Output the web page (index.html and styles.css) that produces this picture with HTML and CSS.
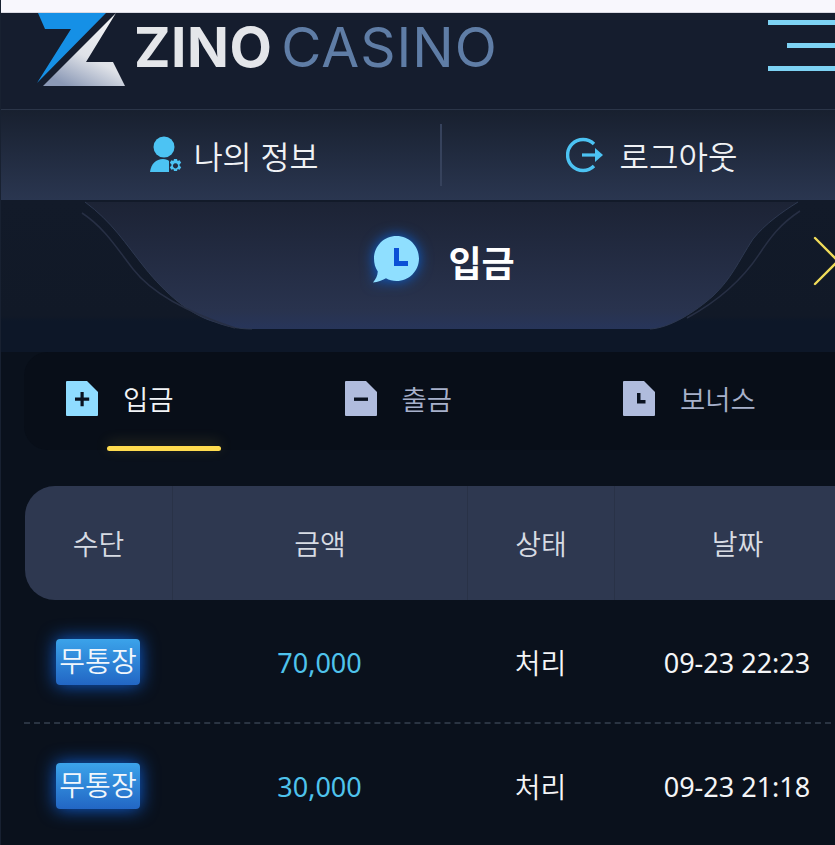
FILE: index.html
```html
<!DOCTYPE html>
<html lang="ko">
<head>
    <meta charset="UTF-8">
    <meta name="viewport" content="width=device-width, initial-scale=1.0">
    <title>Zino Casino - 입금</title>
    <link rel="stylesheet" href="styles.css">
</head>
<body>
    <div class="page">
        <div class="top-strip"></div>

        <header class="site-header">
            <a class="logo" href="#">
                <svg class="logo-mark" width="90" height="73" viewBox="0 0 90 73">
                    <defs>
                        <linearGradient id="markGrey" x1="0.8" y1="0.1" x2="0.3" y2="1">
                            <stop offset="0" stop-color="#f1f2f4"/>
                            <stop offset="0.55" stop-color="#dfe2e8"/>
                            <stop offset="1" stop-color="#8b99b6"/>
                        </linearGradient>
                    </defs>
                    <polygon points="1,0 69,0 0,70 34,16 8,16" fill="#1590e6"/>
                    <polygon points="79,0 49,49 76,49 88,73 6,73" fill="url(#markGrey)"/>
                </svg>
                <span class="logo-text"><b>ZINO</b><span>CASINO</span></span>
            </a>
            <div class="menu-btn">
                <span></span>
                <span class="short"></span>
                <span></span>
            </div>
        </header>

        <nav class="user-nav">
            <a class="user-link user-link-info" href="#">
                <svg width="34" height="38" viewBox="0 0 34 38">
                    <circle cx="14" cy="11" r="10.5" fill="#4cc3f3"/>
                    <path d="M0 36 C1 28 6 23 13 23 C16 23 18 24 19 25 L19 36 Z" fill="#4cc3f3"/>
                    <path d="M24 23 h3 l.6 2 2-.8 1.6 2.6-1.6 1.4 v1.6 l1.6 1.4-1.6 2.6-2-.8-.6 2 h-3 l-.6-2-2 .8-1.6-2.6 1.6-1.4 v-1.6 l-1.6-1.4 1.6-2.6 2 .8 Z M25.5 27.2 a2.6 2.6 0 1 0 .01 0 Z" fill="#4cc3f3" fill-rule="evenodd"/>
                </svg>
                <span>나의 정보</span>
            </a>
            <a class="user-link" href="#">
                <svg width="38" height="36" viewBox="0 0 38 36">
                    <path d="M28 7 A15.5 15.5 0 1 0 28 29" fill="none" stroke="#4cc3f3" stroke-width="3.4"/>
                    <rect x="16" y="16.4" width="15" height="3.2" fill="#4cc3f3"/>
                    <polygon points="29,11 37,18 29,25" fill="#4cc3f3"/>
                </svg>
                <span>로그아웃</span>
            </a>
        </nav>

        <section class="title-area">
            <svg class="title-shape" width="835" height="130" viewBox="0 0 835 130">
                <defs>
                    <linearGradient id="panelFill" x1="0" y1="0" x2="0" y2="1">
                        <stop offset="0" stop-color="#1c2335"/>
                        <stop offset="0.85" stop-color="#29334e"/>
                        <stop offset="1" stop-color="#27355a"/>
                    </linearGradient>
                </defs>
                <path d="M85 2 C112 22 125 43 145 68 C165 93 190 115 215 122 C228 127 240 129 252 129 L650 129 C670 128 695 112 713 96 C732 78 738 62 753 39 C765 24 782 12 798 2 Z" fill="url(#panelFill)"/>
                <path d="M85 2 C112 22 125 43 145 68 C165 93 190 115 215 122 C228 127 240 129 252 129" fill="none" stroke="#2d3850" stroke-width="1"/>
                <path d="M650 129 C670 128 695 112 713 96 C732 78 738 62 753 39 C765 24 782 12 798 2" fill="none" stroke="#2d3850" stroke-width="1"/>
                <path d="M82 13 C105 28 118 50 133 69 C150 91 180 110 235 128" fill="none" stroke="#272f44" stroke-width="1.5"/>
                <path d="M800 11 C780 24 770 38 760 53 C745 76 720 100 687 118" fill="none" stroke="#272f44" stroke-width="1.5"/>
            </svg>
            <svg class="next-arrow" width="22" height="50" viewBox="0 0 22 50">
                <path d="M2 2 L25 25 L2 48" fill="none" stroke="#f0dc5a" stroke-width="2.4" stroke-linecap="round"/>
            </svg>
            <div class="title-row">
                <svg class="title-icon" width="48" height="48" viewBox="0 0 48 48">
                    <path d="M24.500 1 C37 1 47 11 47 23.500 C47 36 37 46 24.500 46 C20.500 46 17 45 14 43.200 C10 45.500 6 47 1 47.500 C4 44 5.500 40.500 5.800 36.500 C3.200 32.800 2 28.500 2 23.500 C2 11 12 1 24.500 1 Z" fill="#8fdfff"/>
                    <path d="M22 13 h5 v13 h9 v5 h-14 Z" fill="#0b50d6"/>
                </svg>
                <h1>입금</h1>
            </div>
        </section>

        <div class="tabs">
            <a class="tab active" href="#">
                <svg width="32" height="35" viewBox="0 0 32 35">
                    <path class="doc" d="M1 0 H21 L32 11 V34 a1 1 0 0 1 -1 1 H1 a1 1 0 0 1 -1 -1 V1 a1 1 0 0 1 1 -1 Z"/>
                    <path class="doc-mark" d="M14.500 11 h3.200 v5.500 h5.500 v3.200 h-5.500 v5.500 h-3.200 v-5.500 h-5.500 v-3.200 h5.500 Z"/>
                </svg>
                <span>입금</span>
            </a>
            <a class="tab" href="#">
                <svg width="32" height="35" viewBox="0 0 32 35">
                    <path class="doc" d="M1 0 H21 L32 11 V34 a1 1 0 0 1 -1 1 H1 a1 1 0 0 1 -1 -1 V1 a1 1 0 0 1 1 -1 Z"/>
                    <rect class="doc-mark" x="9" y="16.500" width="14" height="3.400"/>
                </svg>
                <span>출금</span>
            </a>
            <a class="tab" href="#">
                <svg width="32" height="35" viewBox="0 0 32 35">
                    <path class="doc" d="M1 0 H21 L32 11 V34 a1 1 0 0 1 -1 1 H1 a1 1 0 0 1 -1 -1 V1 a1 1 0 0 1 1 -1 Z"/>
                    <path class="doc-mark" d="M14 12 h3.500 v7 h5 v3.500 h-8.500 Z"/>
                </svg>
                <span>보너스</span>
            </a>
        </div>

        <div class="history">
            <div class="history-head">
                <div>수단</div>
                <div>금액</div>
                <div>상태</div>
                <div>날짜</div>
            </div>
            <div class="history-row">
                <div><span class="badge">무통장</span></div>
                <div class="amount">70,000</div>
                <div>처리</div>
                <div class="date">09-23 22:23</div>
            </div>
            <div class="history-row">
                <div><span class="badge">무통장</span></div>
                <div class="amount">30,000</div>
                <div>처리</div>
                <div class="date">09-23 21:18</div>
            </div>
        </div>
    </div>
</body>
</html>
```

FILE: styles.css
```css
* {
    margin: 0;
    padding: 0;
    box-sizing: border-box;
}

html, body {
    height: 100%;
    overflow: hidden;
}

body {
    background-color: #0a111c;
    color: #fff;
    font-family: "Noto Sans", "Noto Sans CJK KR", sans-serif;
}

a {
    color: inherit;
    text-decoration: none;
}

.page {
    width: 835px;
    height: 845px;
    overflow: hidden;
    border-left: 1px solid #182131;
}

.top-strip {
    height: 13px;
    margin-left: -1px;
    background: #f8f7fd;
    border-bottom: 1px solid #d9d9e2;
}

/* header */
.site-header {
    display: flex;
    justify-content: space-between;
    height: 97px;
    margin-left: -1px;
    background: #151d2e;
    border-bottom: 1px solid #2b3548;
}

.logo {
    display: flex;
    align-items: flex-start;
    padding-left: 37px;
}

.logo-text {
    margin: 9px 0 0 7px;
    font-family: Inter, "Liberation Sans", sans-serif;
    font-size: 55px;
    font-weight: 400;
    line-height: 50px;
    white-space: nowrap;
    letter-spacing: 1px;
}

.logo-text b {
    color: #e4e6ea;
    font-weight: 700;
    letter-spacing: 0.5px;
}

.logo-text span {
    margin-left: 9px;
    color: #5f7da6;
}

.menu-btn {
    display: flex;
    flex-direction: column;
    align-items: flex-end;
    gap: 18px;
    width: 67px;
    padding-top: 7px;
}

.menu-btn span {
    display: block;
    width: 67px;
    height: 5px;
    background: #7dd2f4;
}

.menu-btn .short {
    width: 48px;
}

/* my info / logout */
.user-nav {
    display: grid;
    grid-template-columns: 441px 419px;
    align-items: center;
    height: 90px;
    width: 860px;
    background: linear-gradient(#18202f, #2a3650);
}

.user-link {
    display: flex;
    align-items: center;
    justify-content: center;
    gap: 16px;
    height: 62px;
    font-family: "Noto Sans CJK KR", sans-serif;
    font-size: 32px;
    font-weight: 350;
    color: #f0f2f5;
}

.user-link-info {
    gap: 10px;
    padding-left: 27px;
    font-size: 31.5px;
    border-right: 2px solid #36425c;
}

/* title */
.title-area {
    position: relative;
    display: flex;
    justify-content: center;
    height: 152px;
    padding: 35px 0 0 51px;
    background: linear-gradient(#121a29 0, #111927 116px, #0d1728 121px, #0d1728 152px);
}

.title-shape {
    position: absolute;
    top: 0;
    left: -1px;
}

.next-arrow {
    position: absolute;
    top: 36px;
    right: 0;
}

.title-row {
    position: relative;
    display: flex;
    align-items: flex-start;
    gap: 28px;
    height: 48px;
}

.title-icon {
    filter: drop-shadow(0 0 7px #0a62d8);
}

.title-row h1 {
    font-family: "Noto Sans CJK KR", sans-serif;
    font-size: 36px;
    font-weight: 700;
    line-height: 52px;
}

/* tabs */
.tabs {
    display: grid;
    grid-template-columns: repeat(3, 278.5px);
    width: 840px;
    height: 98px;
    margin-left: 23px;
    background: #080e18;
    border-radius: 24px 0 0 24px;
}

.tab {
    position: relative;
    display: flex;
    align-items: center;
    gap: 25px;
    height: 98px;
    padding: 0 0 6px 42px;
    font-family: "Noto Sans CJK KR", sans-serif;
    font-size: 27.5px;
    font-weight: 350;
    color: #a7b1cb;
}

.tab .doc {
    fill: #b0bcdd;
}

.tab .doc-mark {
    fill: #0a1220;
}

.tab.active {
    color: #f2f4f7;
}

.tab.active .doc {
    fill: #8fdcff;
}

.tab.active::after {
    content: "";
    position: absolute;
    left: 83px;
    bottom: -1px;
    width: 114px;
    height: 5px;
    background: #ffdc4f;
    border-radius: 3px;
    box-shadow: 0 -3px 14px rgba(255, 220, 79, 0.22);
}

/* history table */
.history {
    width: 836px;
    margin: 36px 0 0 24px;
}

.history-head,
.history-row {
    display: grid;
    grid-template-columns: 148px 295px 147px 246px;
    align-items: center;
    text-align: center;
    font-family: "Noto Sans CJK KR", sans-serif;
    font-size: 28px;
    font-weight: 350;
}

.history-head {
    height: 114px;
    background: #2e3850;
    border-radius: 30px 0 0 30px;
    color: #d7dbe3;
}

.history-head div {
    line-height: 114px;
    border-right: 1px solid #293247;
}

.history-row {
    height: 124px;
    margin-left: -1px;
    padding-top: 2px;
    border-bottom: 2px dashed #2a3442;
    color: #f4f5f7;
}

.badge {
    display: inline-block;
    width: 84px;
    height: 46px;
    line-height: 43px;
    border-radius: 4px;
    background: linear-gradient(#3ba3ea, #2266c4);
    box-shadow: 0 0 18px rgba(16, 104, 235, 0.9);
    color: #f2f7fc;
    font-size: 28px;
    white-space: nowrap;
}

.amount,
.date {
    font-family: "Noto Sans", sans-serif;
    font-size: 27px;
    font-weight: 400;
}

.amount {
    color: #4fc3ec;
}

.date {
    color: #f4f5f7;
}
```
